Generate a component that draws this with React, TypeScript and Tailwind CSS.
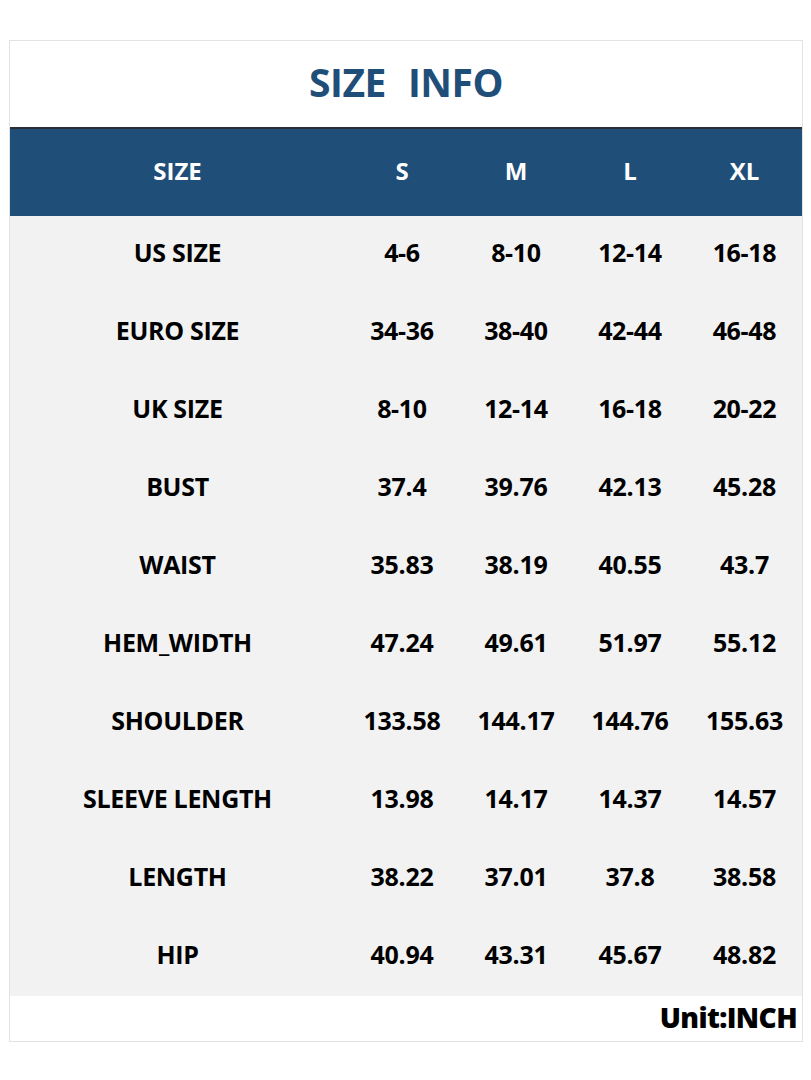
import React from "react";

const rows: [string, string, string, string, string][] = [
  ["US SIZE", "4-6", "8-10", "12-14", "16-18"],
  ["EURO SIZE", "34-36", "38-40", "42-44", "46-48"],
  ["UK SIZE", "8-10", "12-14", "16-18", "20-22"],
  ["BUST", "37.4", "39.76", "42.13", "45.28"],
  ["WAIST", "35.83", "38.19", "40.55", "43.7"],
  ["HEM_WIDTH", "47.24", "49.61", "51.97", "55.12"],
  ["SHOULDER", "133.58", "144.17", "144.76", "155.63"],
  ["SLEEVE LENGTH", "13.98", "14.17", "14.37", "14.57"],
  ["LENGTH", "38.22", "37.01", "37.8", "38.58"],
  ["HIP", "40.94", "43.31", "45.67", "48.82"],
];

export default function App() {
  return (
    <div
      className="w-[811px] h-[1080px] bg-white pt-[40px] pl-[9px]"
      style={{ fontFamily: '"Open Sans", "Noto Sans", sans-serif' }}
    >
      <div className="w-[794px] border border-[#e3e3e3] flex flex-col">
        <div className="h-[86px] flex items-center justify-center gap-[22px] pb-[6px]">
          <span className="text-[39px] font-bold text-[#1f4e79] tracking-[-0.5px] leading-none">
            SIZE
          </span>
          <span className="text-[39px] font-bold text-[#1f4e79] tracking-[-0.5px] leading-none">
            INFO
          </span>
        </div>
        <div className="h-[2px] bg-[#2a2f36]" />
        <div className="h-[87px] bg-[#1f4e79] grid grid-cols-[335px_114px_114px_114px_115px] items-center text-white text-[24px] font-bold leading-none pb-[4px]">
          <div className="text-center">SIZE</div>
          <div className="text-center">S</div>
          <div className="text-center">M</div>
          <div className="text-center">L</div>
          <div className="text-center">XL</div>
        </div>
        <div className="bg-[#f2f2f2] flex flex-col">
          {rows.map((r) => (
            <div
              key={r[0]}
              className="h-[78px] grid grid-cols-[335px_114px_114px_114px_115px] items-center text-black text-[25px] font-bold leading-none tracking-[-0.3px] pb-[5px]"
            >
              {r.map((c, i) => (
                <div key={i} className="text-center">
                  {c}
                </div>
              ))}
            </div>
          ))}
        </div>
        <div className="h-[45px] flex items-center justify-end pr-[5px] pb-[3px]">
          <span className="text-[28px] font-extrabold text-black leading-none tracking-[-0.6px]">
            Unit:INCH
          </span>
        </div>
      </div>
    </div>
  );
}
